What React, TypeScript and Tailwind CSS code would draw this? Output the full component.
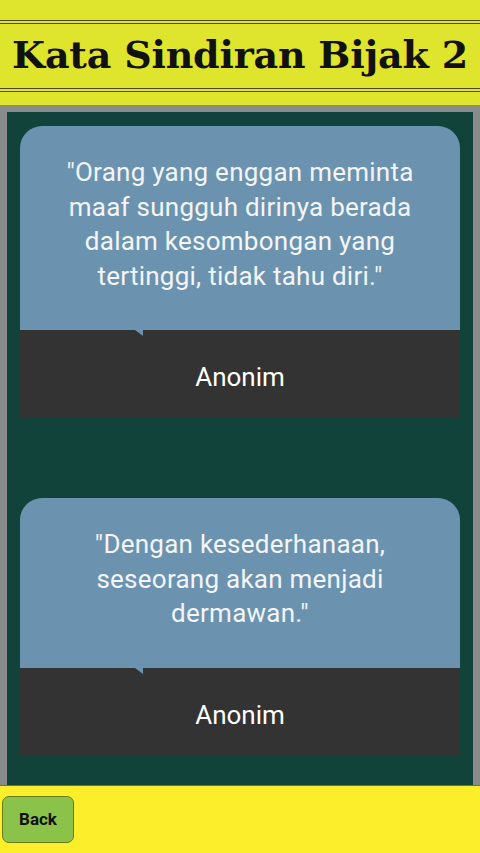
import React from 'react';

const quotes = [
    { text: '"Orang yang enggan meminta maaf sungguh dirinya berada dalam kesombongan yang tertinggi, tidak tahu diri."', author: 'Anonim' },
    { text: '"Dengan kesederhanaan, seseorang akan menjadi dermawan."', author: 'Anonim' },
];

function QuoteCard({ text, author }: { text: string; author: string }) {
    return (
        <div className="flex flex-col">
            {/* Quote bubble */}
            <div className="relative bg-[#6b93af] rounded-t-[22px] px-[34px] pt-[29px] pb-[37px] text-center text-[26px] tracking-[0.25px] leading-[34.5px] text-[#f3f5f7]">
                {text}
                <svg className="absolute left-[115px] top-full" width="8" height="6" viewBox="0 0 8 6">
                    <polygon points="0,0 8,0 8,6" fill="#6b93af" />
                </svg>
            </div>
            {/* Author strip */}
            <div className="bg-[#333333] pt-[30px] pb-[24px] text-center text-[26px] leading-[34px] text-white">
                {author}
            </div>
        </div>
    );
}

export default function App() {
    return (
        <div className="w-[480px] h-[853px] flex flex-col overflow-hidden" style={{ fontFamily: 'Roboto, "Noto Sans", sans-serif' }}>

            {/* Header */}
            <div className="h-[105px] bg-[#dfe42c] pt-[20px] shrink-0">
                <div className="h-[72px] border-y-[4px] border-double border-[#4a4a2a] flex items-center justify-center">
                    <h1 className="text-[38px] font-bold text-[#111] tracking-[-0.2px] -mt-[4px]" style={{ fontFamily: '"DejaVu Serif", "Liberation Serif", serif' }}>
                        Kata Sindiran Bijak 2
                    </h1>
                </div>
            </div>

            {/* Content frame */}
            <div className="flex-1 bg-[#8a8a8a] px-[7px] pt-[7px] flex">
                <div className="flex-1 bg-[#12433a] px-[13px] pt-[14px] flex flex-col gap-[80px]">
                    {quotes.map((q, i) => (
                        <QuoteCard key={i} text={q.text} author={q.author} />
                    ))}
                </div>
            </div>

            {/* Footer */}
            <div className="h-[68px] shrink-0 bg-[#fdee2b] border-t border-[#7a6e1e] px-[2px] pt-[10px]">
                <button className="w-[72px] h-[47px] bg-[#8bc34a] border border-[#6b7a18] rounded-[7px] text-[17px] font-bold text-[#111]">
                    Back
                </button>
            </div>
        </div>
    );
}
